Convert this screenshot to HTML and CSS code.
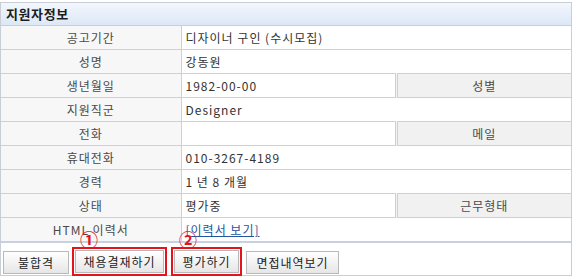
FILE: index.html
```html
<!DOCTYPE html>
<html>
<head>
  <title>지원자정보</title>
  <link rel="stylesheet" href="styles.css">
</head>
<body>
  <div class="panel">
    <div class="panel-title">지원자정보</div>
    <table class="info">
      <colgroup>
        <col class="c-label">
        <col class="c-value">
        <col class="c-side">
      </colgroup>
      <tr><th>공고기간</th><td colspan="2">디자이너 구인 (수시모집)</td></tr>
      <tr><th>성명</th><td colspan="2">강동원</td></tr>
      <tr><th>생년월일</th><td>1982-00-00</td><th class="side">성별</th></tr>
      <tr><th>지원직군</th><td colspan="2">Designer</td></tr>
      <tr><th>전화</th><td></td><th class="side">메일</th></tr>
      <tr><th>휴대전화</th><td colspan="2">010-3267-4189</td></tr>
      <tr><th>경력</th><td colspan="2">1 년 8 개월</td></tr>
      <tr><th>상태</th><td>평가중</td><th class="side">근무형태</th></tr>
      <tr><th>HTML 이력서</th><td colspan="2"><a href="#" class="resume">[이력서 보기]</a></td></tr>
    </table>
    <div class="actions">
      <button class="btn btn-reject">불합격</button>
      <span class="mark">
        <span class="num">&#9312;</span>
        <button class="btn btn-approve">채용결재하기</button>
      </span>
      <span class="mark">
        <span class="num">&#9313;</span>
        <button class="btn btn-eval">평가하기</button>
      </span>
      <button class="btn btn-history">면접내역보기</button>
    </div>
  </div>
</body>
</html>
```

FILE: styles.css
```css
body {
  margin: 0;
  padding: 2px 0 0 0;
  background: #ffffff;
  font-family: "Noto Sans CJK KR", "Noto Sans", sans-serif;
  font-size: 12px;
  color: #333;
}

.panel {
  width: 570px;
  border: 1px solid #c9ced6;
  background: #fff;
}

.panel-title {
  height: 22px;
  line-height: 22px;
  padding-left: 5px;
  font-weight: bold;
  font-size: 13px;
  letter-spacing: 0.6px;
  color: #1d1d1d;
  background: linear-gradient(#f3f7fd, #dce7f7);
  border-bottom: 1px solid #c3cfdf;
}

.info {
  width: 100%;
  border-collapse: collapse;
  table-layout: fixed;
}

.c-label {
  width: 180px;
}

.c-value {
  width: 215px;
}

.info th,
.info td {
  height: 23px;
  padding: 0;
  border: 1px solid #c6d2df;
  font-weight: normal;
  letter-spacing: 1px;
}

.info tr:first-child th,
.info tr:first-child td {
  border-top: none;
}

.info th:first-child {
  border-left: none;
}

.info td:last-child,
.info th.side {
  border-right: none;
}

.info th {
  background: #f7f7f7;
  color: #4a4a4a;
  text-align: center;
}

.info th.side {
  background: #f1f1f1;
  border-left: 3px double #c6d2df;
}

.info td {
  padding-left: 4px;
  color: #333;
}

.resume {
  color: #24559e;
  text-decoration: underline;
}

.actions {
  height: 32px;
  display: flex;
  align-items: flex-end;
  gap: 3px;
  padding-left: 2px;
  border-top: 1px solid #c6d2df;
}

.btn {
  height: 23px;
  padding: 0;
  font-family: "Noto Sans CJK KR", "Noto Sans", sans-serif;
  font-size: 12px;
  letter-spacing: 1px;
  color: #222;
  background: linear-gradient(#ffffff, #e6e6e6);
  border: 1px solid #b9b9b9;
  margin-bottom: 1px;
}

.btn-reject {
  width: 66px;
}

.btn-approve {
  width: 89px;
}

.btn-eval {
  width: 65px;
}

.btn-history {
  width: 93px;
  margin-left: 1px;
}

.mark {
  position: relative;
  display: flex;
  padding: 1px;
  border: 2px solid #e3141b;
  margin-bottom: -1px;
}

.mark + .mark {
  margin-left: 1px;
}

.mark .btn {
  margin-bottom: 0;
}

.num {
  position: absolute;
  left: 6px;
  top: -19px;
  font-size: 18px;
  line-height: 18px;
  color: #e3141b;
  font-weight: bold;
}
```
